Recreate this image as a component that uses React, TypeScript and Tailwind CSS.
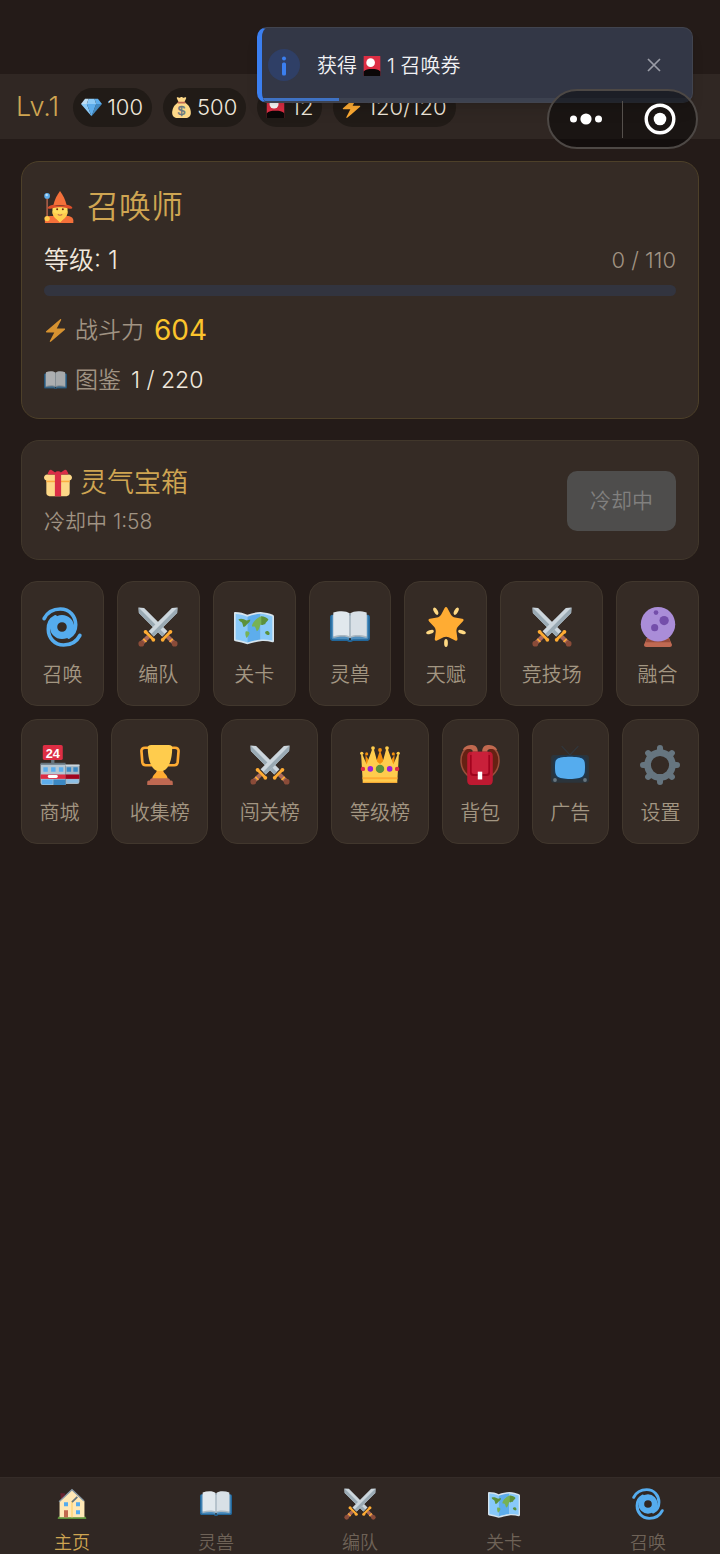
import { useState } from 'react'
import type { ReactNode } from 'react'
import clsx from 'clsx'

interface IconProps {
  className?: string
}

function Emoji({ className, children }: IconProps & { children: ReactNode }) {
  return (
    <svg viewBox="0 0 36 36" className={clsx('shrink-0 overflow-visible', className)} aria-hidden="true">
      {children}
    </svg>
  )
}

function Gem({ className }: IconProps) {
  return (
    <Emoji className={className}>
      <path fill="#BDDDF4" d="M13 3H7l-7 9h10z" />
      <path fill="#5DADEC" d="M36 12l-7-9h-6l3 9z" />
      <path fill="#4289C1" d="M26 12h10L18 33z" />
      <path fill="#8CCAF7" d="M10 12H0l18 21zm3-9l-3 9h16l-3-9z" />
      <path fill="#5DADEC" d="M18 33l-8-21h16z" />
    </Emoji>
  )
}

function MoneyBag({ className }: IconProps) {
  return (
    <Emoji className={className}>
      <path fill="#FDD888" d="M12 10C6 13 2 20 2 27c0 6 4 9 9 9h14c5 0 9-3 9-9 0-7-4-14-10-17z" />
      <path fill="#FDD888" d="M13 9l-3-7c-.5-2 1.500-2 3-1 1 .7 2 .5 3-.3 1-.9 3-.9 4 0 1 .8 2 1 3 .3 1.500-1 3.500-1 3 1l-3 7z" />
      <rect x="11" y="8" width="14" height="3" rx="1.500" fill="#BF6952" />
      <text x="18" y="31.500" textAnchor="middle" fontSize="23" fontFamily="Liberation Sans" fill="#67757F" stroke="#67757F" strokeWidth=".8">$</text>
    </Emoji>
  )
}

function FlowerCard({ className }: IconProps) {
  return (
    <Emoji className={className}>
      <rect x="3" y="0" width="30" height="36" rx="1" fill="#DD2E44" />
      <circle cx="15.500" cy="12" r="7.800" fill="#fff" />
      <path fill="#0b0707" d="M3 28c3-3.500 8-4.500 15-4.500s12 1 15 4.500v7a1 1 0 0 1-1 1H4a1 1 0 0 1-1-1z" />
    </Emoji>
  )
}

function Bolt({ className }: IconProps) {
  return (
    <Emoji className={className}>
      <path
        fill="#FFAC33"
        d="M32.938 15.651C32.792 15.260 32.418 15 32 15H19.925L26.890 1.458c.219-.426.106-.947-.271-1.243C26.437.071 26.218 0 26 0c-.233 0-.466.082-.653.243L18 6.588 3.347 19.243c-.316.273-.43.714-.284 1.105S3.582 21 4 21h12.075L9.110 34.542c-.219.426-.106.947.271 1.243.182.144.401.215.619.215.233 0 .466-.082.653-.243L18 29.412l14.653-12.655c.317-.273.43-.714.285-1.106z"
      />
    </Emoji>
  )
}

function Book({ className }: IconProps) {
  return (
    <Emoji className={className}>
      <path fill="#226699" d="M2 7h32c1.200 0 2 1 2 2v19c0 1.500-.8 2.500-2 2.500H20.500c-1 1.300-4 1.300-5 0H2c-1.200 0-2-1-2-2.500V9c0-1 .8-2 2-2z" />
      <path fill="#4F8FBF" d="M1.500 7.500H4V27h28V7.500h2.500V28l-1 1H21c-2 .8-4 .8-6 0H2.500l-1-1z" />
      <path fill="#AAB8C2" d="M3 7c5-2 12-2 15 1v20c-3-1.500-10-1.500-15 0z" />
      <path fill="#AAB8C2" d="M33 7c-5-2-12-2-15 1v20c3-1.500 10-1.500 15 0z" />
      <path fill="#E1E8ED" d="M3 5c5-1.800 12-1.800 14.500.6V26.500c-3-1.800-9.500-1.500-14.500 0z" />
      <path fill="#D8E0E6" d="M33 5c-5-1.800-12-1.800-14.500.6V26.500c3-1.800 9.500-1.500 14.500 0z" />
      <path fill="#AAB8C2" d="M17.400 5.500h1.200V27h-1.200z" />
      <circle cx="18" cy="29" r="1" fill="#292F33" />
    </Emoji>
  )
}

function Gift({ className }: IconProps) {
  return (
    <Emoji className={className}>
      <path fill="#FDD888" d="M33 31c0 2.200-1.800 4-4 4H7c-2.200 0-4-1.800-4-4V14c0-2.200 1.800-4 4-4h22c2.200 0 4 1.800 4 4v17z" />
      <path fill="#FDD888" d="M36 11c0 2.200-1.800 4-4 4H4c-2.200 0-4-1.800-4-4s1.800-4 4-4h28c2.200 0 4 1.800 4 4z" />
      <path fill="#FCAB40" d="M3 15h30v2H3z" />
      <path fill="#DA2F47" d="M19 3h-2c-1.657 0-3 1.343-3 3v29h8V6c0-1.656-1.343-3-3-3z" />
      <path
        fill="#DA2F47"
        d="M16 7c1.100 0 1.263-.516.361-1.147L9.639 1.147c-.902-.631-2.085-.366-2.631.589L4.992 5.264C4.446 6.219 4.900 7 6 7h10zm4 0c-1.100 0-1.263-.516-.361-1.147l6.723-4.706c.901-.631 2.085-.366 2.631.589l2.016 3.527C31.554 6.219 31.100 7 30 7H20z"
      />
    </Emoji>
  )
}

function Cyclone({ className }: IconProps) {
  return (
    <Emoji className={className}>
      <g fill="none" stroke="#55ACEE" strokeLinecap="round">
        <circle cx="18" cy="18" r="7.600" strokeWidth="6.600" />
        <path strokeWidth="3.300" d="M1.900 10.500C5 4.300 10.500 1.800 16.500 1.800 25 1.800 30.300 8.500 30.300 16c0 5-2.300 9-6.300 11" />
        <path strokeWidth="3.300" d="M34.100 25.500c-3.100 6.200-8.600 8.700-14.600 8.700C11 34.200 5.700 27.500 5.700 20c0-5 2.300-9 6.300-11" />
      </g>
    </Emoji>
  )
}

function Sword() {
  return (
    <>
      <path fill="#CCD6DD" d="M35.500.5l-5 .3L9.500 21.800l4.700 4.700L35.200 5.500z" />
      <path fill="#9AAAB4" d="M35.500.5L11.900 24.200l2.300 2.300L35.200 5.500z" />
      <path stroke="#AA695B" strokeWidth="3.800" d="M9.500 26.500l-6 6" />
      <path stroke="#FFAC33" strokeWidth="1.400" d="M4.800 28.700l2.800 2.800" />
      <circle cx="3" cy="33" r="2.600" fill="#8A4B38" />
      <path stroke="#FFAC33" strokeWidth="2.400" strokeLinecap="round" d="M7 22.500l6.500 6.500" />
      <circle cx="6.800" cy="22.300" r="1.700" fill="#FFAC33" />
      <circle cx="13.800" cy="29.500" r="1.700" fill="#FFAC33" />
    </>
  )
}

function Swords({ className }: IconProps) {
  return (
    <Emoji className={className}>
      <g transform="matrix(-1 0 0 1 36 0)">
        <Sword />
      </g>
      <Sword />
    </Emoji>
  )
}

function WorldMap({ className }: IconProps) {
  return (
    <Emoji className={className}>
      <path
        fill="#D5E4EE"
        d="M1 4.500c4.200 0 8 1 11 2.500 4-1.500 8-2.300 12-2.500 4 .3 8 1.300 11 2.500.7.300 1 .8 1 1.500v22c0 1-.6 1.400-1.500 1.200-3.500-.9-7-1.200-10.500-.9-4 .4-8 1.600-12 2.700-3.500-1.300-7-2.200-10.700-2.700C.4 30.600 0 30.200 0 29.500v-24c0-.6.4-1 1-1z"
      />
      <path fill="#88C9F9" d="M1.500 6.200c3.500.1 7 .9 10.500 2.500V32c-3.400-1.300-6.800-2.200-10.500-2.700z" />
      <path fill="#5DADEC" d="M12 8.700c4-1.500 8-2.400 12-2.600v23.200c-4 .4-8 1.500-12 2.700z" />
      <path fill="#88C9F9" d="M24 6.100c3.700.3 7.200 1.100 10.500 2.400v21.700c-3.500-.8-7-1.200-10.500-.9z" />
      <path fill="#5C913B" d="M4 11c2.500-1.200 5-.2 7.500 1.200l3-1c.5 2-1.500 3-3 4.500-1 1.200-1.800 2.200-3 2.200-.8-1.300-.4-3-1.800-4.300C5.700 13 4.500 12.400 4 11z" />
      <path
        fill="#77B255"
        d="M10.500 22c1.800-.5 3.500.4 3.500 1.800-.5 1.700-1.700 2.800-2.700 4-1-1.700-1.400-4-.8-5.800zM18.500 12.500c1.800-2.200 4-3.700 6.500-4.200v7.500c-1.400-.7-1.700 1.500-2.200 3.200-.6 1.500-1.200 2.500-2.300 2.800-1-1.500-.6-3.300-2-4.200-1.300-.5-2.600.6-2.300-1 .3-1.500 1.300-3 2.300-4.100z"
      />
      <path fill="#5C913B" d="M24.500 8.300c2.500.2 5.500 1.200 6.500 3-.8 2-2.400 2-3 4.200-1.500-.4-2 1-3.500.6zM28 22.500c1.300-1.300 3-1.300 4 .8.300 1.400-.5 2.200-1.800 1.800-1.100-.4-2.300-.9-2.200-2.600z" />
    </Emoji>
  )
}

function GlowingStar({ className }: IconProps) {
  return (
    <Emoji className={className}>
      <path
        fill="#FFAC33"
        d="M28.840 17.638c-.987 1.044-1.633 3.067-1.438 4.493l.892 6.441c.197 1.427-.701 2.087-1.996 1.469l-5.851-2.796c-1.295-.62-3.408-.611-4.700.018l-5.826 2.842c-1.291.629-2.193-.026-2.007-1.452l.843-6.449c.186-1.427-.475-3.444-1.470-4.481l-4.494-4.688c-.996-1.037-.655-2.102.755-2.365l6.370-1.188c1.410-.263 3.116-1.518 3.793-2.789L16.762.956c.675-1.271 1.789-1.274 2.473-.009L22.330 6.660c.686 1.265 2.400 2.507 3.814 2.758l6.378 1.141c1.412.252 1.761 1.314.774 2.359l-4.456 4.720z"
      />
      <g fill="#FFD983">
        <ellipse cx="8.800" cy="3.800" rx="1.700" ry="3.600" transform="rotate(-28 8.800 3.800)" />
        <ellipse cx="27.200" cy="3.800" rx="1.700" ry="3.600" transform="rotate(28 27.200 3.800)" />
        <ellipse cx="3.600" cy="22.500" rx="3.600" ry="1.700" transform="rotate(-20 3.600 22.500)" />
        <ellipse cx="32.400" cy="22.500" rx="3.600" ry="1.700" transform="rotate(20 32.400 22.500)" />
        <ellipse cx="18" cy="32.300" rx="1.700" ry="3.600" />
      </g>
    </Emoji>
  )
}

function CrystalBall({ className }: IconProps) {
  return (
    <Emoji className={className}>
      <path fill="#BF6952" d="M8 28h20l2.400 5.500c.5 1.400-.2 2.500-1.900 2.500h-21c-1.700 0-2.400-1.100-1.900-2.500z" />
      <path fill="#974B3A" d="M8 28.500h20l1 3.200H7z" />
      <circle cx="18" cy="15.500" r="15.500" fill="#AA8DD8" />
      <circle cx="23.500" cy="12.200" r="4.200" fill="#744EAA" />
      <circle cx="15" cy="18.600" r="3.200" fill="#744EAA" />
      <circle cx="16.200" cy="5" r="2.100" fill="#744EAA" />
    </Emoji>
  )
}

function Store({ className }: IconProps) {
  return (
    <Emoji className={className}>
      <path fill="#66757F" d="M10 13h3v5h-3z" />
      <rect x="2.500" y="0" width="18" height="13.500" rx="1.500" fill="#DD2E44" />
      <text x="11.500" y="11.400" textAnchor="middle" fontSize="11.500" fontWeight="700" fontFamily="Liberation Sans" fill="#fff">24</text>
      <path fill="#B5C6D2" d="M.5 17H23v19H2.500a2 2 0 0 1-2-2z" />
      <path fill="#A5B8C6" d="M23 18h12.500v15a2 2 0 0 1-2 2H23z" />
      <path fill="#66757F" d="M.5 16H23v1.800H.5z" />
      <path fill="#CCD6DD" d="M23 17.500h12.500V19H23z" />
      <path fill="#5DADEC" d="M3 20h4v4H3zM10 20h4v4h-4zM17 20h4v4h-4zM1.500 31h10v4.500h-10z" />
      <path fill="#3B88C3" d="M24 20h4v4h-4zM30 20h4v4h-4zM12 31h11v5H12z" />
      <path fill="#8CBFE6" d="M24 31h10.500v3H24z" />
      <path fill="#DD2E44" d="M.5 26.500H23v4H.5z" />
      <path fill="#A0041E" d="M23 26.500h12.500v4H23z" />
      <rect x="7" y="27" width="9" height="2.600" rx="1.300" fill="#fff" />
    </Emoji>
  )
}

function Trophy({ className }: IconProps) {
  return (
    <Emoji className={className}>
      <path fill="none" stroke="#FFAC33" strokeWidth="2.400" d="M9 2.500H4.500C2.300 2.500 1.200 3.700 1.300 5.500l.8 10c.2 1.800 1.200 2.700 3 2.700H11M27 2.500h4.500c2.200 0 3.300 1.200 3.200 3l-.8 10c-.2 1.800-1.200 2.700-3 2.700H25" />
      <path fill="#FFAC33" d="M15.500 21h5c0 5 4.500 5.500 4.500 10H11c0-4.500 4.500-5 4.500-10z" />
      <path fill="#FFCC4D" d="M7 2c0-1 1-2 3-2h16c2 0 3 1 3 2 0 9-2 19-8.500 21.500h-5C9 21 7 11 7 2z" />
      <path fill="#BF6952" d="M11 30h14c1.500 0 2 1 2 2h1c1 0 1.500.8 1.500 2v2h-23v-2c0-1.200.5-2 1.500-2h1c0-1 .5-2 2-2z" />
    </Emoji>
  )
}

function Crown({ className }: IconProps) {
  return (
    <Emoji className={className}>
      <path fill="#F4900C" d="M5 28V9l4.500 7L13 9l2 5 3-9.500L21 14l2-5 3.500 7L31 9v19z" />
      <path fill="#FFCC4D" d="M2.500 34L1 8.500h1.200L6 17.500 11 3.500h1.400L15.500 15 18 17l2.500-2 3.100-11.500H25l5 14 3.800-9H35L33.500 34z" />
      <path fill="#FFAC33" d="M2.300 29h31.400v1.800H2.300zM2.500 33h31v1h-31z" />
      <g fill="#FFCC4D">
        <circle cx="1.600" cy="7.500" r="1.500" />
        <circle cx="11.700" cy="2.800" r="1.700" />
        <circle cx="24.300" cy="2.800" r="1.700" />
        <circle cx="34.400" cy="7.500" r="1.500" />
      </g>
      <g fill="#F4900C">
        <circle cx="18" cy="4.500" r="1.700" />
        <circle cx="6" cy="8" r="1.400" />
        <circle cx="30" cy="8" r="1.400" />
      </g>
      <circle cx="18" cy="21.500" r="3.800" fill="#5C913B" />
      <circle cx="9.300" cy="21.500" r="2.500" fill="#9C1FD6" />
      <circle cx="26.700" cy="21.500" r="2.500" fill="#9C1FD6" />
      <circle cx="2.600" cy="21.500" r="2" fill="#DD2E44" />
      <circle cx="33.400" cy="21.500" r="2" fill="#DD2E44" />
    </Emoji>
  )
}

function Backpack({ className }: IconProps) {
  return (
    <Emoji className={className}>
      <path fill="#662113" d="M8 2C3 4 1 8 1 14c0 6 2 10 6 13l3 1V6zM28 2c5 2 7 6 7 12 0 6-2 10-6 13l-3 1V6z" />
      <path fill="none" stroke="#9A4E3A" strokeWidth="1.400" d="M7 27.500C3 24 .900 19.500.900 14S2.800 4.500 7 2M29 27.500c4-3.500 6.100-8 6.100-13.500S33.200 4.500 29 2" />
      <path fill="#C1694F" d="M2.500 4.500C4 1 7.500 0 11 0c3 .2 5 2 5 6h-4.500c0-1.800-1.200-2.500-3-2.500S5 4 2.500 4.500zM33.500 4.500C32 1 28.500 0 25 0c-3 .2-5 2-5 6h4.500c0-1.800 1.200-2.500 3-2.500s3.500.5 6 1z" />
      <path fill="#BE1931" d="M10 6h16c2.500 0 3.500 1.500 3.500 4v22c0 2.500-1 4-3.500 4H10c-2.500 0-3.500-1.500-3.500-4V10c0-2.500 1-4 3.500-4z" />
      <path fill="#A0041E" d="M9 9h18v16c0 2-1 3-3 3H12c-2 0-3-1-3-3z" />
      <path fill="#C9203A" d="M10.500 6h15v18c0 1.500-.7 2-2 2h-11c-1.300 0-2-.5-2-2z" />
      <path fill="#fff" d="M16 24h4v7h-4z" />
    </Emoji>
  )
}

function Television({ className }: IconProps) {
  return (
    <Emoji className={className}>
      <path fill="none" stroke="#31373D" strokeWidth="1" d="M18 9L10.500 1M18 9l7.500-8" />
      <rect x="1" y="9" width="34" height="25" rx="2" fill="#2B343B" />
      <path fill="#1E3850" d="M11 9.500h14c5 0 8 2 8 6v8c0 5-3 7.500-8 7.500H11c-5 0-8-2.500-8-7.500v-8c0-4 3-6 8-6z" />
      <path fill="#55ACEE" d="M11 11c4-.6 10-.6 14 0 4 .5 6 2 6.300 5 .3 3 .3 5 0 8-.3 3-2.300 5.500-6.300 6-4 .8-10 .8-14 0-4-.5-6-3-6.300-6-.3-3-.3-5 0-8 .3-3 2.300-4.500 6.300-5z" />
      <circle cx="4.500" cy="31.500" r="1.700" fill="#66757F" />
      <circle cx="31.500" cy="31.500" r="1.700" fill="#66757F" />
    </Emoji>
  )
}

function Gear({ className }: IconProps) {
  return (
    <Emoji className={className}>
      <g stroke="#66757F">
        <circle cx="18" cy="18" r="11.200" fill="none" strokeWidth="6" />
        <path strokeWidth="5.400" strokeLinecap="round" d="M18 2.700v4M18 29.300v4M2.700 18h4M29.300 18h4M7.300 7.300l2.500 2.500M26.200 26.200l2.500 2.500M28.700 7.300l-2.500 2.500M9.800 26.200l-2.500 2.500" />
      </g>
    </Emoji>
  )
}

function House({ className }: IconProps) {
  return (
    <Emoji className={className}>
      <path fill="#5C913B" d="M2 34c0-1.500 1-2 2-2h28c1.200 0 2 .5 2 2v1H2z" />
      <path fill="#66212F" d="M5 6h5v6l-4 4z" />
      <path fill="#FFE8B6" d="M4 15L18 2l14 13v18H4z" />
      <path fill="#FFD983" d="M17 15l2-1v19h-2z" />
      <path fill="none" stroke="#8899A6" strokeWidth="1.500" d="M3.500 15.500L18 2l13.500 12.500" />
      <path fill="none" stroke="#66757F" strokeWidth="2" d="M18 16l6-6" />
      <path fill="#55ACEE" d="M9 16h4.500v4.500H9zM22.500 16H27v4.500h-4.500zM22.500 25H27v4.500h-4.500z" />
      <path fill="#C1694F" d="M9 25h4.500v8H9z" />
    </Emoji>
  )
}

function Mage({ className }: IconProps) {
  return (
    <Emoji className={className}>
      <path fill="#F4703A" d="M1 36v-3c0-3 3-5 7-5h18c4 0 7 2 7 5v3z" />
      <path fill="none" stroke="#C1694F" strokeWidth="1.500" d="M3.500 6v25" />
      <circle cx="3.500" cy="5.500" r="3.200" fill="#5DADEC" />
      <circle cx="3" cy="4.500" r="1.400" fill="#BDDDF4" />
      <circle cx="3.500" cy="31" r="3" fill="#FFCC4D" />
      <path fill="#FFDC5D" d="M9.500 17h17v7c0 3-2.500 6-5 7.500L18 35l-3.500-3.500c-2.500-1.500-5-4.500-5-7.500z" />
      <path fill="#FFCC4D" d="M9.500 22.500c1.500 2.500 4 3 8.500 3s7-.5 8.500-3c.3 4.500-2 7.500-5 9.500L18 35.500 14.500 32c-3-2-5.300-5-5-9.500z" />
      <circle cx="14.800" cy="20.500" r="1.100" fill="#662113" />
      <circle cx="21.200" cy="20.500" r="1.100" fill="#662113" />
      <path fill="none" stroke="#C1694F" strokeWidth="1.200" d="M15.500 26.500c1.700 1 3.300 1 5 0" />
      <path fill="#F4703A" d="M18 0c3.500 4.500 6 10 7.500 16h-15C12 10 14.500 4.500 18 0z" />
      <path fill="#DD4F2A" d="M10.500 15.500c5 1.300 10 1.300 15 0 3.500.8 6.500 2 6.500 3.500-1.500 1.500-4.500 1-6.500.2-4-1.400-11-1.400-15 0-2 .8-5 1.300-6.500-.2 0-1.500 3-2.700 6.500-3.500z" />
    </Emoji>
  )
}

const resources = [
  { icon: Gem, value: '100' },
  { icon: MoneyBag, value: '500' },
  { icon: FlowerCard, value: '12' },
  { icon: Bolt, value: '120/120' }
]

const menuItems = [
  { icon: Cyclone, label: '召唤' },
  { icon: Swords, label: '编队' },
  { icon: WorldMap, label: '关卡' },
  { icon: Book, label: '灵兽' },
  { icon: GlowingStar, label: '天赋' },
  { icon: Swords, label: '竞技场' },
  { icon: CrystalBall, label: '融合' },
  { icon: Store, label: '商城' },
  { icon: Trophy, label: '收集榜' },
  { icon: Swords, label: '闯关榜' },
  { icon: Crown, label: '等级榜' },
  { icon: Backpack, label: '背包' },
  { icon: Television, label: '广告' },
  { icon: Gear, label: '设置' }
]

const tabs = [
  { icon: House, label: '主页' },
  { icon: Book, label: '灵兽' },
  { icon: Swords, label: '编队' },
  { icon: WorldMap, label: '关卡' },
  { icon: Cyclone, label: '召唤' }
]

function Toast({ onClose }: { onClose: () => void }) {
  return (
    <div
      role="status"
      className="absolute top-[27px] right-[27px] z-10 flex h-[76px] w-[436px] items-center overflow-hidden rounded-[10px] border border-l-[5px] border-[#41444f] border-l-[#3b7ff0] bg-[#333746] pl-[6px] pr-6 shadow-lg"
    >
      <span className="flex size-8 shrink-0 items-center justify-center rounded-full bg-[#2f3f66]">
        <svg viewBox="0 0 32 32" className="size-8" aria-hidden="true">
          <circle cx="16" cy="9.500" r="2" fill="#3b7ff0" />
          <rect x="14" y="13.500" width="4" height="13" rx="1.500" fill="#3b7ff0" />
        </svg>
      </span>
      <p className="ml-[17px] flex flex-1 items-center pt-[2px] text-[20px] leading-7 text-[#f1f1f4]">
        获得
        <FlowerCard className="mx-[5px] size-5" />
        1 召唤券
      </p>
      <button type="button" aria-label="关闭" onClick={onClose} className="flex size-7 items-center justify-center">
        <svg viewBox="0 0 14 14" className="size-[14px]" fill="none" stroke="#9a9ca6" strokeWidth="1.700" aria-hidden="true">
          <path d="M1 1l12 12M13 1L1 13" />
        </svg>
      </button>
      <span className="absolute inset-x-0 bottom-0 h-[4px] bg-[#3d4250]">
        <span className="block h-[3px] w-[18%] bg-[#3f72c4]" />
      </span>
    </div>
  )
}

function Capsule() {
  return (
    <div className="absolute top-[89px] right-[22px] z-20 flex h-[60px] w-[151px] items-center rounded-full border-2 border-[#4d4845] bg-black/45">
      <button type="button" aria-label="更多" className="flex flex-1 justify-center">
        <svg viewBox="0 0 34 12" className="h-3 w-[34px]" fill="#fff" aria-hidden="true">
          <circle cx="4.500" cy="6" r="3.500" />
          <circle cx="17" cy="6" r="5.600" />
          <circle cx="29.500" cy="6" r="3.500" />
        </svg>
      </button>
      <span className="h-[37px] w-px bg-[#55504c]" />
      <button type="button" aria-label="退出" className="flex flex-1 justify-center">
        <svg viewBox="0 0 32 32" className="size-8" aria-hidden="true">
          <circle cx="16" cy="16" r="13.800" fill="none" stroke="#fff" strokeWidth="3.400" />
          <circle cx="16" cy="16" r="6.300" fill="#fff" />
        </svg>
      </button>
    </div>
  )
}

export default function App() {
  const [toastOpen, setToastOpen] = useState(true)
  const [activeTab, setActiveTab] = useState(0)

  return (
    <div className="relative flex min-h-screen flex-col bg-[#241b18] pt-[74px] font-['Inter','Noto_Sans_CJK_SC',sans-serif] font-[350] text-[#f0e8dc]">
      {toastOpen && <Toast onClose={() => setToastOpen(false)} />}
      <Capsule />

      <header className="flex h-[65px] items-center gap-[11px] bg-[#302723] px-4 pt-[2px]">
        <span className="mr-[3px] text-[27px] text-[#cfa552]">Lv.1</span>
        {resources.map(({ icon: Icon, value }) => (
          <span key={value} className="flex h-[39px] items-center gap-[5px] rounded-full bg-[#211b17] pl-2 pr-[9px] text-[22px]">
            <Icon className="size-[21px]" />
            {value}
          </span>
        ))}
      </header>

      <main className="flex flex-col gap-[21px] px-[21px] pt-[22px]">
        <section className="rounded-[18px] border border-[#4d4029] bg-[#352b25] px-[22px] pt-[22px] pb-5">
          <h1 className="flex items-center gap-[11px] text-[32px] leading-[46px] text-[#cfa552]">
            <Mage className="size-8" />
            召唤师
          </h1>
          <div className="mt-3 flex items-center justify-between leading-9">
            <span className="text-[25px]">等级: 1</span>
            <span className="text-[22px] text-[#a09383]">0 / 110</span>
          </div>
          <div role="progressbar" aria-label="经验" aria-valuenow={0} aria-valuemax={110} className="mt-[7px] h-[11px] rounded-full bg-[#32343f]" />
          <div className="mt-4 flex items-center leading-9">
            <Bolt className="size-[23px] opacity-80" />
            <span className="ml-2 text-[23px] text-[#a09383]">战斗力</span>
            <span className="ml-[10px] text-[28px] font-normal text-[#fcc42c]">604</span>
          </div>
          <div className="mt-[14px] flex items-center leading-9">
            <Book className="size-[23px] opacity-70" />
            <span className="ml-2 text-[23px] text-[#a09383]">图鉴</span>
            <span className="ml-[10px] text-[23px]">1 / 220</span>
          </div>
        </section>

        <section className="flex items-center justify-between rounded-[18px] border border-[#41372b] bg-[#352b25] px-[22px] pt-[22px] pb-[21px]">
          <div>
            <h2 className="flex items-center gap-2 text-[27px] leading-10 text-[#cfa552]">
              <Gift className="size-7" />
              灵气宝箱
            </h2>
            <p className="mt-[3px] text-[21px] leading-8 text-[#a09383]">冷却中 1:58</p>
          </div>
          <button type="button" disabled className="h-[60px] rounded-[10px] bg-[#4e4d4c] px-[23px] text-[21px] text-[#81807f]">
            冷却中
          </button>
        </section>

        <div className="flex flex-wrap gap-[13px]">
          {menuItems.map(({ icon: Icon, label }) => (
            <button
              key={label}
              type="button"
              className="flex flex-auto flex-col items-center rounded-2xl border border-[#41372d] bg-[#352b25] px-4 pt-[25px] pb-[15px] text-[20px] leading-[30px] text-[#a39682]"
            >
              <Icon className="mb-[13px] size-10" />
              {label}
            </button>
          ))}
        </div>
      </main>

      <nav className="sticky bottom-0 mt-auto grid grid-cols-5 border-t border-[#352c28] bg-[#302723]">
        {tabs.map(({ icon: Icon, label }, index) => (
          <button
            key={label}
            type="button"
            onClick={() => setActiveTab(index)}
            className={clsx(
              'flex flex-col items-center gap-3 pt-[10px] text-[18px] leading-[22px]',
              index === activeTab ? 'text-[#cfa552]' : 'text-[#6e6257]'
            )}
          >
            <Icon className="size-8" />
            {label}
          </button>
        ))}
      </nav>
    </div>
  )
}
